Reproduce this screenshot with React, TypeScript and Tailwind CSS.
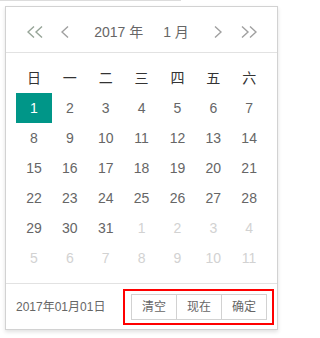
import React from 'react';

const WEEK = ['日', '一', '二', '三', '四', '五', '六'];

function buildDays() {
  const days: { n: number; other: boolean }[] = [];
  for (let i = 1; i <= 31; i++) days.push({ n: i, other: false });
  for (let i = 1; days.length < 42; i++) days.push({ n: i, other: true });
  return days;
}

function Chevron({ dir, double, color }: { dir: 'left' | 'right'; double?: boolean; color: string }) {
  const w = double ? 16 : 8;
  const one = (x: number) =>
    dir === 'left'
      ? `M${x + 7} 0.5 L${x + 1} 6 L${x + 7} 11.5`
      : `M${x + 1} 0.5 L${x + 7} 6 L${x + 1} 11.5`;
  return (
    <svg width={w} height={12} viewBox={`0 0 ${w} 12`} fill="none" stroke={color} strokeWidth={1.4}>
      <path d={one(0)} />
      {double && <path d={one(8)} />}
    </svg>
  );
}

export default function App() {
  const days = buildDays();
  const rows = [0, 1, 2, 3, 4, 5].map(r => days.slice(r * 7, r * 7 + 7));

  return (
    <div
      className="relative w-[299px] h-[338px] bg-white overflow-hidden"
      style={{ fontFamily: '"Liberation Sans", Arial, "Noto Sans CJK SC", sans-serif' }}
    >
      <div className="h-px w-[181px] bg-[#dcdcdc]" />

      <div className="ml-[5px] mt-[5px] w-[273px] border border-[#d2d2d2] bg-white shadow-[0_2px_4px_rgba(0,0,0,0.12)]">
        {/* header */}
        <div className="h-[46px] pt-[10px] pb-[5px] pl-[21px] pr-[20px] border-b border-[#e2e2e2] flex items-start justify-between">
          <div className="h-[30px] flex items-center gap-[18px]">
            <Chevron dir="left" double color="#97a598" />
            <Chevron dir="left" color="#a0a0a0" />
          </div>
          <div className="h-[30px] flex items-center gap-[20px] text-[14px] text-[#666]">
            <span>2017 年</span>
            <span>1 月</span>
          </div>
          <div className="h-[30px] flex items-center gap-[19px]">
            <Chevron dir="right" color="#a0a0a0" />
            <Chevron dir="right" double color="#a0a0a0" />
          </div>
        </div>

        {/* content */}
        <div className="p-[10px]">
          <div className="grid grid-cols-7">
            {WEEK.map(w => (
              <div key={w} className="w-[36px] h-[30px] flex items-center justify-center text-[14px] text-[#333]">
                {w}
              </div>
            ))}
          </div>
          {rows.map((row, ri) => (
            <div key={ri} className="grid grid-cols-7">
              {row.map((d, di) => {
                const selected = !d.other && d.n === 1;
                return (
                  <div
                    key={di}
                    className={
                      'w-[36px] h-[30px] flex items-center justify-center text-[14px] ' +
                      (selected ? 'bg-[#009688] text-white' : d.other ? 'text-[#d2d2d2]' : 'text-[#666]')
                    }
                  >
                    {d.n}
                  </div>
                );
              })}
            </div>
          ))}
        </div>

        {/* footer */}
        <div className="h-[46px] px-[10px] border-t border-[#e2e2e2] flex items-center justify-between">
          <span className="text-[12px] text-[#666]">2017年01月01日</span>
          <div className="flex">
            <button className="w-[46px] h-[26px] border border-[#d2d2d2] text-[12px] text-[#666] bg-white">清空</button>
            <button className="-ml-px w-[46px] h-[26px] border border-[#d2d2d2] text-[12px] text-[#666] bg-white">现在</button>
            <button className="-ml-px w-[46px] h-[26px] border border-[#d2d2d2] text-[12px] text-[#666] bg-white">确定</button>
          </div>
        </div>
      </div>

      {/* highlight annotation */}
      <div className="absolute left-[123px] top-[289px] w-[151px] h-[36px] border-2 border-[#ff0000]" />
    </div>
  );
}
